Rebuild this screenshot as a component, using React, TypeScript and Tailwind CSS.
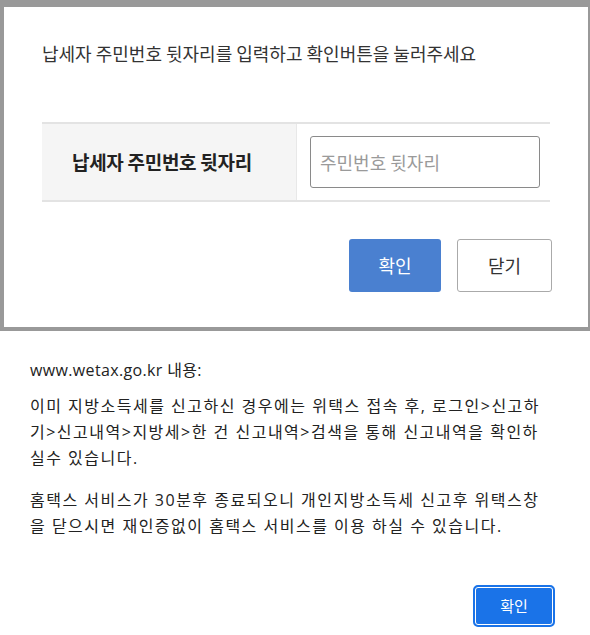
import React from "react";

const kr = { fontFamily: '"Noto Sans CJK KR", "Noto Sans", sans-serif' };
const dlg = { fontFamily: '"Open Sans", "Noto Sans CJK KR", sans-serif' };

const TaxpayerPanel = () => (
  <div className="border-t-[7px] border-l-4 border-r-2 border-b-4 border-[#999999] bg-white h-[331px]" style={kr}>
    <p className="pl-[38px] pt-[33px] text-[18px] text-[#333333]">
      납세자 주민번호 뒷자리를 입력하고 확인버튼을 눌러주세요
    </p>

    <div className="mx-[38px] mt-[55px] flex h-[80px] border-t-2 border-b-2 border-[#e3e3e3]">
      <div className="flex w-[255px] items-center pl-[30px] bg-[#f5f5f5] border-r border-[#e8e8e8]">
        <span className="text-[19px] font-bold tracking-[-0.3px] text-[#222222]">납세자 주민번호 뒷자리</span>
      </div>
      <div className="flex flex-1 items-center pl-[13px]">
        <input
          className="h-[52px] w-[230px] rounded-[3px] border border-[#8a8a8a] px-[9px] text-[18px] placeholder:text-[#9a9a9a] outline-none"
          placeholder="주민번호 뒷자리"
        />
      </div>
    </div>

    <div className="mr-[36px] mt-[37px] flex justify-end gap-[16px]">
      <button className="h-[53px] w-[92px] rounded-[3px] bg-[#4a80d0] text-[18px] text-white">확인</button>
      <button className="h-[53px] w-[95px] rounded-[3px] border border-[#aaaaaa] bg-white text-[18px] text-[#333333]">
        닫기
      </button>
    </div>
  </div>
);

const AlertDialog = () => (
  <div className="bg-white px-[30px] pt-[27px]" style={dlg}>
    <p className="text-[16px] tracking-[0.35px] text-[#222222]">www.wetax.go.kr 내용:</p>
    <div className="mt-[11px] text-[16px] leading-[26px] text-[#222222] tracking-[1.5px]">
      <p>이미 지방소득세를 신고하신 경우에는 위택스 접속 후, 로그인&gt;신고하</p>
      <p>기&gt;신고내역&gt;지방세&gt;한 건 신고내역&gt;검색을 통해 신고내역을 확인하</p>
      <p>실수 있습니다.</p>
      <p className="mt-[16px]">홈택스 서비스가 30분후 종료되오니 개인지방소득세 신고후 위택스창</p>
      <p>을 닫으시면 재인증없이 홈택스 서비스를 이용 하실 수 있습니다.</p>
    </div>
    <div className="mt-[46px] flex justify-end pr-[5px]">
      <button className="h-[42px] w-[82px] rounded-[5px] border-2 border-[#1a73e8] bg-[#1a73e8] text-[15px] text-white shadow-[inset_0_0_0_1px_white]">
        확인
      </button>
    </div>
  </div>
);

export default function App() {
  return (
    <div className="h-[635px] w-[590px] overflow-hidden bg-white">
      <TaxpayerPanel />
      <AlertDialog />
    </div>
  );
}
